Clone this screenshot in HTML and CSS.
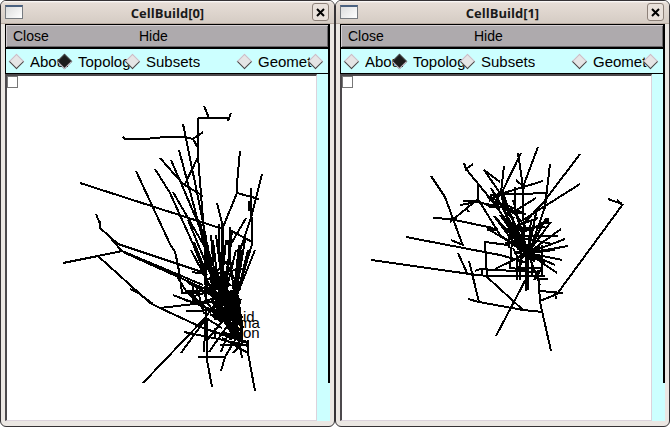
FILE: index.html
```
<!DOCTYPE html>
<html lang="en">
<head>
<meta charset="utf-8">
<title>CellBuild</title>
<link rel="stylesheet" href="styles.css">
</head>
<body>
<main class="desktop">
  <section class="window">
    <header class="titlebar">
      <span class="window-icon"></span>
      <h1 class="title">CellBuild[0]</h1>
      <button class="close" aria-label="Close window"><svg viewBox="0 0 9 9"><path d="M1 1L8 8M8 1L1 8"/></svg></button>
    </header>
    <div class="content">
      <nav class="menubar"><button class="menu">Close</button><button class="menu">Hide</button></nav>
      <div class="pages">
        <label class="page about"><input type="radio" name="page0"><span>About</span></label>
        <label class="page topology"><input type="radio" name="page0" checked><span>Topology</span></label>
        <label class="page subsets"><input type="radio" name="page0"><span>Subsets</span></label>
        <label class="page geometry"><input type="radio" name="page0"><span>Geometry</span></label>
        <label class="page last"><input type="radio" name="page0" aria-label="Management"></label>
      </div>
      <div class="workspace">
        <div class="canvas">
          <button class="handle" aria-label="View menu"></button>
          <svg class="cell" viewBox="7 76 310 344" preserveAspectRatio="xMinYMin slice">
            <path d="M123 137L125 139H145L165 137H185L193 139L203 132M193 139L198 148M204 106L209 118M198 118H229M231 113L228 121M198 118V157L205 244V285
            M80 183L170 212L223 229M136 171L170 244L175 252L178 265L182 292M155 169L170 193L193 244L215 300M160 158L183 184L203 196M183 124L203 222L215 290M179 150L204 244L222 300M171 160L184 190L203 235L225 300M198 157L185 184M173 192L203 244L225 290
            M96 214L100 224V228L118 244M100 221V228M112 240L122 251L203 285M63 263L98 256L122 251M118 244L205 273M123 252L225 298M98 256L150 303L160 308L203 328L248 343M130 289L140 294L150 303M132 288L153 304M160 308L203 303L230 300M173 295L207 308L240 320M143 383L205 318L225 290M181 353L205 320M184 332L223 340L248 346M198 357H225L221 371M225 357L235 340M207 318V360L212 387M204 352L206 310M248 340V353L255 391M242 358L237 330M233 353L245 340
            M240 151L237 183V193L259 199M237 193L223 227V270L230 310M217 203L223 227M262 174L251 218L240 250L232 310M251 188L252 244L237 295M249 201V211M251 201V211M246 218L231 244L222 300M230 227V250M230 230L252 242M255 250L237 295V320M219 224V250L232 315M222 225V310
            M206 235V300M208 245L215 320M211 235L217 310M213 240L222 320M216 235L227 320M226 240L219 310M228 240L237 320M232 230L225 300M236 250L224 300M239 245L231 320M242 250L233 300M245 240L235 300M248 250L236 300M191 250L220 305M194 242L207 275M200 222L216 300M188 220L215 285M210 275L246 268M192 272L205 274
            M178 278L186 291H210L230 310M181 293H200M186 291L198 303L184 300M187 282L220 300M186 311L220 310M187 291L211 312M193 285V305M197 288L204 314M191 297L230 285M198 304L236 290M207 285H230L223 280
            M207 340L225 318M209 352L228 325M215 328V338M220 345H248M222 338L248 353M206 318L222 328M206 266L232 296M208 280L226 262L240 290M212 268L236 310M205 300L222 322L210 314M204 296L218 284M221 352L228 334"/>
            <path class="dense" d="M205 286L230 310L240 325M210 292L240 300L230 340M211 300L243 322M208 310L238 318M215 305L240 338M217 285L240 318M224 280L231 330M237 295L241 320V340M222 318L240 330M224 320L235 338M222 332L242 340M226 302L240 340M229 294L237 340M231 290V312M226 300L242 318M228 310L243 328M233 312L240 340M236 300L238 322M208 290L226 284L220 306M212 296L234 292M227 316L234 334M216 300L232 326M214 312L230 322"/>
            <text x="243" y="322">id</text><text x="239" y="328">ma</text><text x="243" y="338">on</text>
          </svg>
        </div>
        <div class="gutter"></div>
      </div>
    </div>
  </section>
  <section class="window">
    <header class="titlebar">
      <span class="window-icon"></span>
      <h1 class="title">CellBuild[1]</h1>
      <button class="close" aria-label="Close window"><svg viewBox="0 0 9 9"><path d="M1 1L8 8M8 1L1 8"/></svg></button>
    </header>
    <div class="content">
      <nav class="menubar"><button class="menu">Close</button><button class="menu">Hide</button></nav>
      <div class="pages">
        <label class="page about"><input type="radio" name="page1"><span>About</span></label>
        <label class="page topology"><input type="radio" name="page1" checked><span>Topology</span></label>
        <label class="page subsets"><input type="radio" name="page1"><span>Subsets</span></label>
        <label class="page geometry"><input type="radio" name="page1"><span>Geometry</span></label>
        <label class="page last"><input type="radio" name="page1" aria-label="Management"></label>
      </div>
      <div class="workspace">
        <div class="canvas">
          <button class="handle" aria-label="View menu"></button>
          <svg class="cell" viewBox="342 76 310 344" preserveAspectRatio="xMinYMin slice">
            <path d="M431 176L445 197L463 246M451 240L463 245M433 218L450 219L493 228M406 237L500 255L525 262M371 260L470 274L487 276H545M458 253L467 273M469 261L479 302M468 299L479 302L523 310L543 312M508 245L485 242L487 277L523 310M464 163L466 169L473 164M466 169L493 202L520 240M478 183V199L450 222M449 219H457M460 205L477 202L500 207L526 214M463 201H477M466 208L469 212M478 199L500 235L525 253M484 170L500 193L528 253M484 170L500 182
            M504 166L501 193L512 240M521 153L502 192L495 202M518 153L523 187L524 253M538 147L523 187M550 164L545 207L530 250M580 154L543 203L523 224M580 184L523 220M543 181L497 195M548 193L490 195M536 198L512 213M516 180L525 188M608 199L622 204L617 200M623 204L590 249L557 294L540 301M548 279H540M563 293L540 291M555 292L556 299M538 270L540 302L551 351M496 336L527 277L528 253M526 291V253M528 290V255
            M475 271L480 269L495 270L537 272M495 269L528 253M482 270V276M517 280V262L528 253M520 280V262M542 275V245M516 268H542M512 240L510 268L528 270M534 280L542 268
            M528 253L568 246M528 253L565 239M528 253L561 229M528 253L562 260M528 253L557 273M528 253L555 265M528 253L555 250M528 253L546 218M528 253L550 223H540M528 253L531 220M528 253L536 213M528 253L540 285M528 253L500 215M528 253L491 188M528 253L503 198M528 253L488 229M528 253L494 216M528 253L513 200M515 187V210L524 240M510 208L528 230M509 236H558M505 229L545 227M496 202L509 206L525 214M486 205L500 208M487 197L500 201M491 188L502 206M489 201L500 192M494 216L512 240M508 229L523 247M516 226L538 218
            M508 232L528 228M509 240V248M505 243L528 239L552 244M498 195V206M502 190L508 208M505 210L520 213M512 222L508 246M504 222L520 228M524 232L548 221M513 248L520 262M522 262L516 272M532 262V276M537 258L545 262"/>
            <path class="dense" d="M517 248L541 258M514 242L535 261M517 258L540 246M520 255H536M526 244V265M489 206H499M497 201V208M487 229H498M547 218V224M507 213L514 219M514 252H522M509 210L517 214M490 196L496 206"/>
          </svg>
        </div>
        <div class="gutter"></div>
      </div>
    </div>
  </section>
</main>
</body>
</html>
```
FILE: styles.css
```
* { box-sizing: border-box; }
body { margin: 0; background: #fff; font-family: "Liberation Sans", Arial, sans-serif; color: #000; }
button { font: inherit; color: inherit; padding: 0; margin: 0; }
.desktop { display: grid; grid-template-columns: 1fr 1fr; height: 100vh; }
.window { display: flex; flex-direction: column; min-width: 0; border: 1px solid #353235; border-radius: 6px; background: #ebe7e3; overflow: hidden; }
.titlebar { display: grid; grid-template-columns: 18px 1fr 18px; align-items: center; height: 23px; flex: none; padding: 0 4px; background: linear-gradient(#fff 0, #e6ddd6 2px, #d5ccc4 100%); border-bottom: 1px solid #b8aaa0; }
.window-icon { width: 18px; height: 14px; border: 1px solid #777b80; border-top: 2px solid #4a6180; background: linear-gradient(135deg, #ddd, #fff); }
.title { margin: 0; padding-top: 2px; text-align: center; font: bold 13px/20px "Open Sans", "DejaVu Sans", sans-serif; color: #1a1a1a; }
.close { display: flex; align-items: center; justify-content: center; width: 17px; height: 18px; border: 1px solid #8d8179; border-radius: 3px; background: #e9e1db; }
.close svg { width: 9px; height: 9px; }
.close path { fill: none; stroke: #000; stroke-width: 2; }
.content { display: flex; flex-direction: column; flex: 1; min-height: 0; margin: 0 4px 5px; }
.menubar { display: grid; grid-template-columns: 126px 1fr; height: 24px; flex: none; padding-left: 7px; border: 1px solid #000; border-right-width: 2px; background: #aeaaad; box-shadow: inset 1px 1px #d6d0d5, inset -1px -1px #6c696c; }
.menu { border: 0; background: none; text-align: left; font-size: 14px; line-height: 22px; }
.pages { display: flex; height: 26px; flex: none; padding-left: 3px; border: 1px solid #000; border-right-width: 2px; background: #cff; overflow: hidden; }
.page { display: flex; align-items: center; gap: 8px; flex: none; font-size: 15px; }
.page span { overflow: hidden; flex: none; }
.page input { appearance: none; flex: none; width: 11px; height: 11px; margin: 0 0 0 2px; transform: rotate(45deg); background: #e5e5e5; border: 1px solid; border-color: #cbbcc7 #444 #444 #cbbcc7; }
.page input:checked { background: #1c1c1c; border-color: #444 #cbbcc7 #cbbcc7 #444; }
.about { width: 48px; }
.topology { width: 68px; }
.subsets { width: 112px; }
.geometry { width: 71px; }
.about span { width: 38px; }
.topology span { width: 52px; }
.geometry span { width: 54px; }
.workspace { display: flex; flex: 1; min-height: 0; background: #cff; }
.canvas { position: relative; flex: 1; min-width: 0; border: 1px solid #dcd3dc; border-width: 2px 1px 1px 2px; border-top-color: #4c494c; border-left-color: #4c494c; background: #fff; overflow: hidden; }
.handle { position: absolute; left: 0; top: 0; width: 11px; height: 12px; border: 1px solid #777; background: #fff; }
.cell { display: block; width: 100%; height: 100%; }
.cell path { fill: none; stroke: #000; stroke-width: 2; shape-rendering: crispEdges; }
.cell .dense { stroke-width: 3; }
.cell text { font-size: 15px; }
.gutter { width: 13px; flex: none; background: linear-gradient(#000, #000) right top / 2px 309px no-repeat; }
```
